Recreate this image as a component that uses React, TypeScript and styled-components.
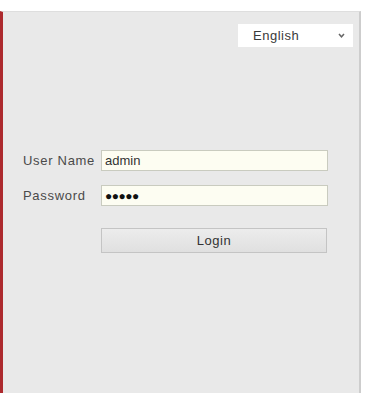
import React from "react";
import styled, { createGlobalStyle } from "styled-components";

const Global = createGlobalStyle`
  html, body { margin: 0; padding: 0; background: #ffffff; }
  body { font-family: "Liberation Sans", Arial, sans-serif; }
  * { box-sizing: border-box; }
`;

const Page = styled.div`
  width: 365px;
  height: 393px;
  padding-top: 11px;
  padding-right: 4px;
  overflow: hidden;
`;

const Panel = styled.div`
  height: 382px;
  background: #e9e9e9;
  border-left: 3px solid #ad2a2e;
  border-right: 2px solid #cdcdcd;
  border-top: 1px solid #dedede;
  display: flex;
  flex-direction: column;
`;

const TopBar = styled.div`
  display: flex;
  justify-content: flex-end;
  padding: 12px 6px 0 0;
`;

const LangSelect = styled.div`
  width: 115px;
  height: 23px;
  background: #ffffff;
  display: flex;
  align-items: center;
  justify-content: space-between;
  padding: 0 8px 0 15px;
  font-size: 13px;
  letter-spacing: 0.5px;
  color: #3a3a3a;
`;

const Form = styled.div`
  display: flex;
  flex-direction: column;
  padding: 103px 0 0 20px;
`;

const Row = styled.div`
  display: flex;
  align-items: center;
  margin-bottom: 14px;
`;

const Label = styled.span`
  width: 78px;
  font-size: 13px;
  letter-spacing: 0.7px;
  color: #4a4a4a;
`;

const Input = styled.div`
  width: 227px;
  height: 21px;
  background: #fdfdf2;
  border: 1px solid #c9cbbf;
  display: flex;
  align-items: center;
  padding-left: 3px;
  font-size: 13px;
  color: #333;
`;

const Dots = styled.span`
  font-size: 12px;
  letter-spacing: -0.5px;
  color: #111;
`;

const ButtonRow = styled.div`
  padding-left: 78px;
  margin-top: 8px;
`;

const LoginButton = styled.div`
  width: 226px;
  height: 25px;
  background: linear-gradient(#ececec, #e0e0e0);
  border: 1px solid #c4c4c4;
  display: flex;
  align-items: center;
  justify-content: center;
  font-size: 13px;
  letter-spacing: 0.5px;
  color: #333;
`;

export default function App() {
  return (
    <>
      <Global />
      <Page>
        <Panel>
          <TopBar>
            <LangSelect>
              <span>English</span>
              <svg width="7" height="5" viewBox="0 0 7 5">
                <path d="M1 1 L3.5 3.8 L6 1" stroke="#666" strokeWidth="1.5" fill="none" />
              </svg>
            </LangSelect>
          </TopBar>
          <Form>
            <Row>
              <Label>User Name</Label>
              <Input>admin</Input>
            </Row>
            <Row>
              <Label>Password</Label>
              <Input>
                <Dots>●●●●●</Dots>
              </Input>
            </Row>
            <ButtonRow>
              <LoginButton>Login</LoginButton>
            </ButtonRow>
          </Form>
        </Panel>
      </Page>
    </>
  );
}
